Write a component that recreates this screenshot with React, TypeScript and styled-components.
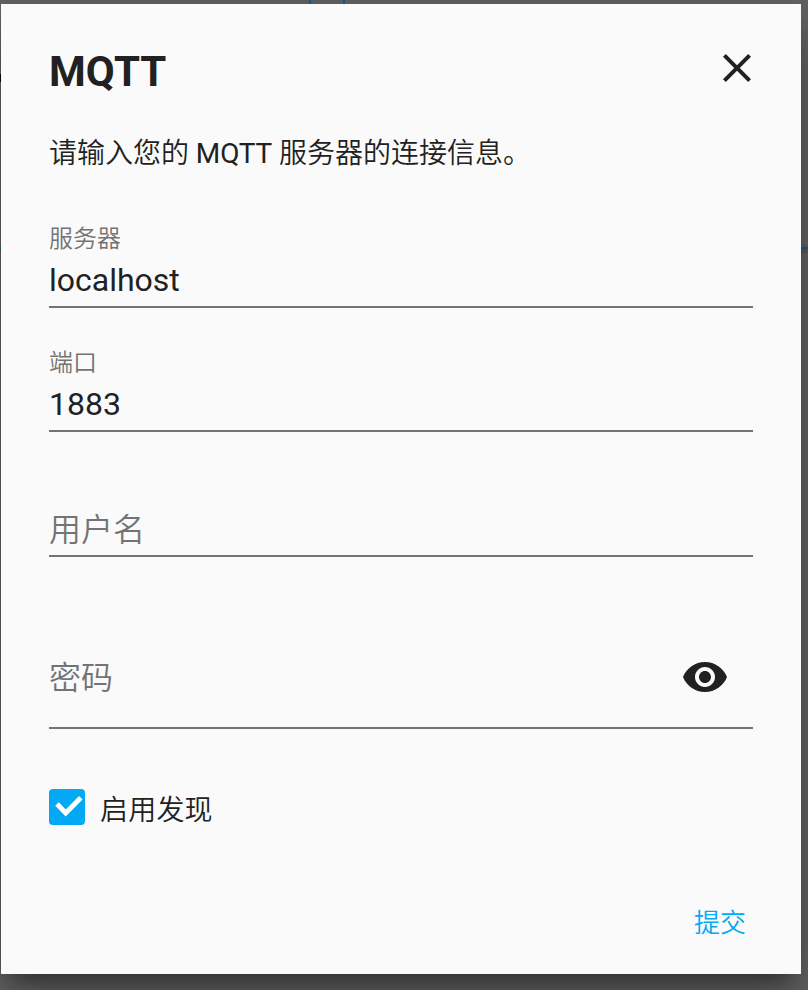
import React, {useState} from 'react';
import styled, {createGlobalStyle} from 'styled-components';

const colors = {
  Primary: '#03a9f4',
  Primary_Dim: '#016896',
  Text: '#212121',
  Secondary: '#737373',
  Dialog: '#fafafa',
};

const closeIcon = () => {
  return (
    <svg width="48" height="48" viewBox="0 0 24 24">
      <path
        d="M19 6.41L17.59 5 12 10.59 6.41 5 5 6.41 10.59 12 5 17.59 6.41 19 12 13.41 17.59 19 19 17.59 13.41 12z"
        fill={colors.Text}
      />
    </svg>
  );
};

const eyeIcon = () => {
  return (
    <svg width="48" height="48" viewBox="0 0 24 24">
      <path
        d="M12 4.5C7 4.5 2.73 7.61 1 12c1.73 4.39 6 7.5 11 7.5s9.27-3.11 11-7.5c-1.73-4.39-6-7.5-11-7.5zM12 17c-2.76 0-5-2.24-5-5s2.24-5 5-5 5 2.24 5 5-2.24 5-5 5zm0-8c-1.66 0-3 1.34-3 3s1.34 3 3 3 3-1.34 3-3-1.34-3-3-3z"
        fill={colors.Text}
      />
    </svg>
  );
};

const checkIcon = () => {
  return (
    <svg width="36" height="36" viewBox="0 0 36 36" fill="none">
      <path d="M8 15L16.7 23.9L31.8 8.8" stroke="white" strokeWidth="5" />
    </svg>
  );
};

function App() {
  const [server, setServer] = useState('localhost');
  const [port, setPort] = useState('1883');
  const [username, setUsername] = useState('');
  const [password, setPassword] = useState('');
  const [isVisible, setIsVisible] = useState(false);
  const [isDiscovery, setIsDiscovery] = useState(true);

  return (
    <Backdrop>
      <GlobalStyle />
      <CardEdge $left={309} $top={0} $width={36} $height={4} $side />
      <CardEdge $left={0} $top={247} $width={808} $height={2} />
      <IconEdge />
      <Dialog>
        <Header>
          <Title>MQTT</Title>
          <CloseButton aria-label="close">{closeIcon()}</CloseButton>
        </Header>
        <Description>
          请输入您的 <Latin>MQTT</Latin> 服务器的连接信息。
        </Description>
        <Field>
          <Label>服务器</Label>
          <Input value={server} onChange={(e) => setServer(e.target.value)} />
        </Field>
        <Field>
          <Label>端口</Label>
          <Input value={port} onChange={(e) => setPort(e.target.value)} />
        </Field>
        <Field $empty>
          <Label />
          <Input
            placeholder="用户名"
            value={username}
            onChange={(e) => setUsername(e.target.value)}
          />
        </Field>
        <PasswordField>
          <Input
            type={isVisible ? 'text' : 'password'}
            placeholder="密码"
            value={password}
            onChange={(e) => setPassword(e.target.value)}
          />
          <EyeButton
            aria-label="toggle"
            onClick={() => setIsVisible(!isVisible)}
          >
            {eyeIcon()}
          </EyeButton>
        </PasswordField>
        <CheckRow onClick={() => setIsDiscovery(!isDiscovery)}>
          <CheckBox $checked={isDiscovery}>
            {isDiscovery && checkIcon()}
          </CheckBox>
          <CheckLabel>启用发现</CheckLabel>
        </CheckRow>
        <Footer>
          <SubmitButton>提交</SubmitButton>
        </Footer>
      </Dialog>
    </Backdrop>
  );
}

export default App;

const GlobalStyle = createGlobalStyle`
  * {
    box-sizing: border-box;
  }

  body {
    margin: 0;
    overflow: hidden;
    font-family: Roboto, 'Noto Sans CJK SC', sans-serif;
    font-weight: 350;
    color: ${colors.Text};
  }

  button,
  input {
    margin: 0;
    padding: 0;
    border: none;
    outline: none;
    background: none;
    font-family: inherit;
    font-weight: inherit;
    color: inherit;
  }
`;

const Backdrop = styled.div`
  position: relative;
  height: 990px;
  padding: 4px 7px 16px 1px;
  overflow: hidden;
  background: #646464;
`;

const CardEdge = styled.div<{
  $left: number;
  $top: number;
  $width: number;
  $height: number;
  $side?: boolean;
}>`
  position: absolute;
  left: ${({$left}) => $left}px;
  top: ${({$top}) => $top}px;
  width: ${({$width}) => $width}px;
  height: ${({$height}) => $height}px;
  ${({$side}) =>
    $side
      ? `border: solid ${colors.Primary_Dim}; border-width: 0 2px;`
      : `background: ${colors.Primary_Dim}; box-shadow: 0 2px 4px rgba(0, 0, 0, 0.4);`}
`;

const IconEdge = styled.div`
  position: absolute;
  left: 0;
  top: 74px;
  width: 1px;
  height: 8px;
  background: #0a0a14;
`;

const Dialog = styled.div`
  position: relative;
  display: flex;
  flex-direction: column;
  width: 800px;
  height: 970px;
  padding: 40px 48px 0;
  background: ${colors.Dialog};
  box-shadow:
    0 32px 48px 4px rgba(0, 0, 0, 0.14),
    0 12px 60px 10px rgba(0, 0, 0, 0.12),
    0 16px 20px -10px rgba(0, 0, 0, 0.4);
`;

const Header = styled.div`
  display: flex;
  justify-content: space-between;
  height: 56px;
`;

const Title = styled.h2`
  margin: 0;
  font-size: 42px;
  font-weight: 700;
  line-height: 56px;
`;

const CloseButton = styled.button`
  width: 48px;
  height: 48px;
  margin-right: -8px;
`;

const Description = styled.p`
  margin: 34px 0 44px;
  font-size: 28px;
  line-height: 40px;
  white-space: nowrap;
`;

const Latin = styled.span`
  font-weight: 400;
  letter-spacing: -0.1px;
`;

const Label = styled.span`
  height: 40px;
  font-size: 24px;
  line-height: 42px;
  color: ${colors.Secondary};
`;

const Input = styled.input`
  width: 100%;
  height: 48px;
  font-size: 32px;
  font-weight: 400;
  line-height: 48px;

  &::placeholder {
    font-weight: 350;
    color: ${colors.Secondary};
    opacity: 1;
  }
`;

const Field = styled.label<{$empty?: boolean}>`
  display: flex;
  flex-direction: column;
  height: ${({$empty}) => ($empty ? 91 : 90)}px;
  margin-bottom: 34px;
  border-bottom: 2px solid ${colors.Secondary};

  ${Input} {
    margin-top: ${({$empty}) => ($empty ? 0 : -2)}px;
  }
`;

const PasswordField = styled.div`
  display: flex;
  align-items: center;
  height: 104px;
  margin-top: 34px;
  padding-top: 2px;
  border-bottom: 2px solid ${colors.Secondary};

  ${Input} {
    padding-top: 2px;
  }
`;

const EyeButton = styled.button`
  width: 48px;
  height: 48px;
  margin-right: 24px;
`;

const CheckRow = styled.div`
  display: flex;
  align-items: center;
  gap: 15px;
  height: 36px;
  margin-top: 60px;
`;

const CheckBox = styled.div<{$checked: boolean}>`
  width: 36px;
  height: 36px;
  border-radius: 4px;
  background: ${({$checked}) => ($checked ? colors.Primary : 'transparent')};
`;

const CheckLabel = styled.span`
  padding-top: 7px;
  font-size: 28px;
  line-height: 36px;
  letter-spacing: 0.2px;
`;

const Footer = styled.div`
  display: flex;
  justify-content: flex-end;
  margin-top: 78px;
  padding-right: 7px;
`;

const SubmitButton = styled.button`
  font-size: 26px;
  line-height: 40px;
  color: ${colors.Primary};
`;
